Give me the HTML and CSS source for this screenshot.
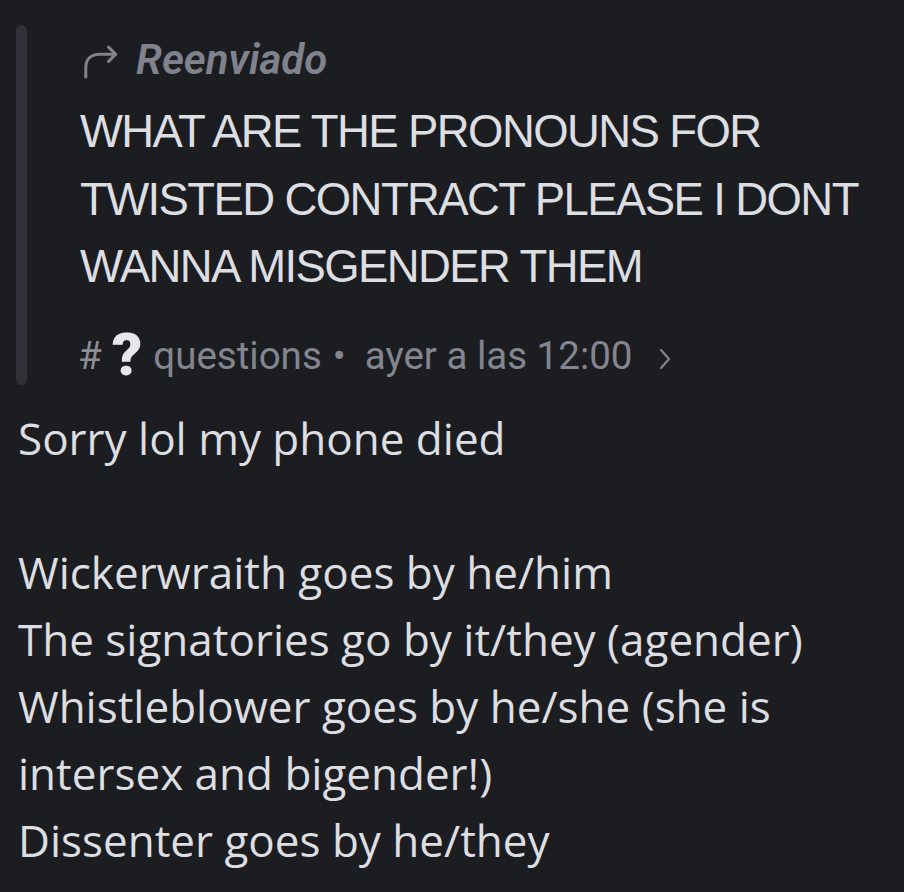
FILE: index.html
```html
<!DOCTYPE html>
<html>
<head>
<meta charset="utf-8">
<link rel="stylesheet" href="styles.css">
</head>
<body>
<div class="message">
  <div class="forward">
    <div class="bar"></div>
    <div class="fwd-content">
      <div class="fwd-label">
        <svg class="fwd-icon" viewBox="0 0 40 40" width="38" height="40">
          <path d="M4 38 V28 C4 19 10 14 19 14 H35" fill="none" stroke="#80838d" stroke-width="3.2" stroke-linecap="round"/>
          <path d="M28 6.5 L35.5 14 L28 21.5" fill="none" stroke="#80838d" stroke-width="3.2" stroke-linecap="round" stroke-linejoin="round"/>
        </svg>
        <span class="fwd-text">Reenviado</span>
      </div>
      <div class="quote">WHAT ARE THE PRONOUNS FOR TWISTED CONTRACT PLEASE I DONT WANNA MISGENDER THEM</div>
      <div class="origin"><span class="hash">#</span><span class="qmark">?</span><span class="channel">questions</span><span class="dot">•</span><span class="time">ayer a las 12:00</span><svg class="chev" viewBox="0 0 12 22" width="12" height="22"><path d="M2 2 L10 11 L2 20" fill="none" stroke="#80838d" stroke-width="2.2" stroke-linecap="round" stroke-linejoin="round"/></svg></div>
    </div>
  </div>
  <div class="body-text">
    <p>Sorry lol my phone died</p>
    <p class="blank">&nbsp;</p>
    <p>Wickerwraith goes by he/him</p>
    <p>The signatories go by it/they (agender)</p>
    <p>Whistleblower goes by he/she (she is intersex and bigender!)</p>
    <p>Dissenter goes by he/they</p>
  </div>
</div>
</body>
</html>
```

FILE: styles.css
```css
html, body {
  margin: 0;
  padding: 0;
  background: #1c1d21;
}
body {
  width: 904px;
  height: 892px;
  overflow: hidden;
}
.message {
  padding-top: 25px;
}
.forward {
  display: flex;
  margin-left: 16px;
}
.bar {
  width: 11px;
  border-radius: 6px;
  background: #2f3038;
  flex: none;
}
.fwd-content {
  padding-left: 53px;
}
.fwd-label {
  display: flex;
  align-items: center;
  height: 68px;
}
.fwd-icon {
  width: 38px;
  height: 40px;
  margin-left: 2px;
  margin-right: 16px;
  position: relative;
  top: 1px;
}
.fwd-text {
  font-family: Roboto, "Liberation Sans", sans-serif;
  font-style: italic;
  font-weight: 600;
  font-size: 42px;
  color: #80838d;
}
.quote {
  font-family: "Liberation Sans", Arial, sans-serif;
  font-size: 45.5px;
  letter-spacing: -1.6px;
  line-height: 67.5px;
  color: #dcdee2;
  width: 800px;
  margin-top: 5px;
}
.origin {
  margin-top: 24px;
  height: 60px;
  line-height: 60px;
  white-space: nowrap;
  font-family: Roboto, "Liberation Sans", sans-serif;
  font-size: 38.5px;
  color: #83868f;
}
.hash {
  color: #8b8e96;
  margin-left: -2px;
  margin-right: 10px;
}
.qmark {
  display: inline-block;
  line-height: 1;
  font-weight: 900;
  font-size: 60px;
  color: #e6e7ea;
  vertical-align: -6px;
  margin-right: 11px;
}
.dot {
  margin: 0 19px 0 11px;
}
.chev {
  margin-left: 27px;
  vertical-align: -1px;
}
.body-text {
  padding-left: 18px;
  margin-top: 20px;
  font-family: "Open Sans", "Noto Sans", sans-serif;
  font-size: 44px;
  line-height: 67px;
  color: #dcdee2;
}
.body-text p {
  margin: 0;
}
```
